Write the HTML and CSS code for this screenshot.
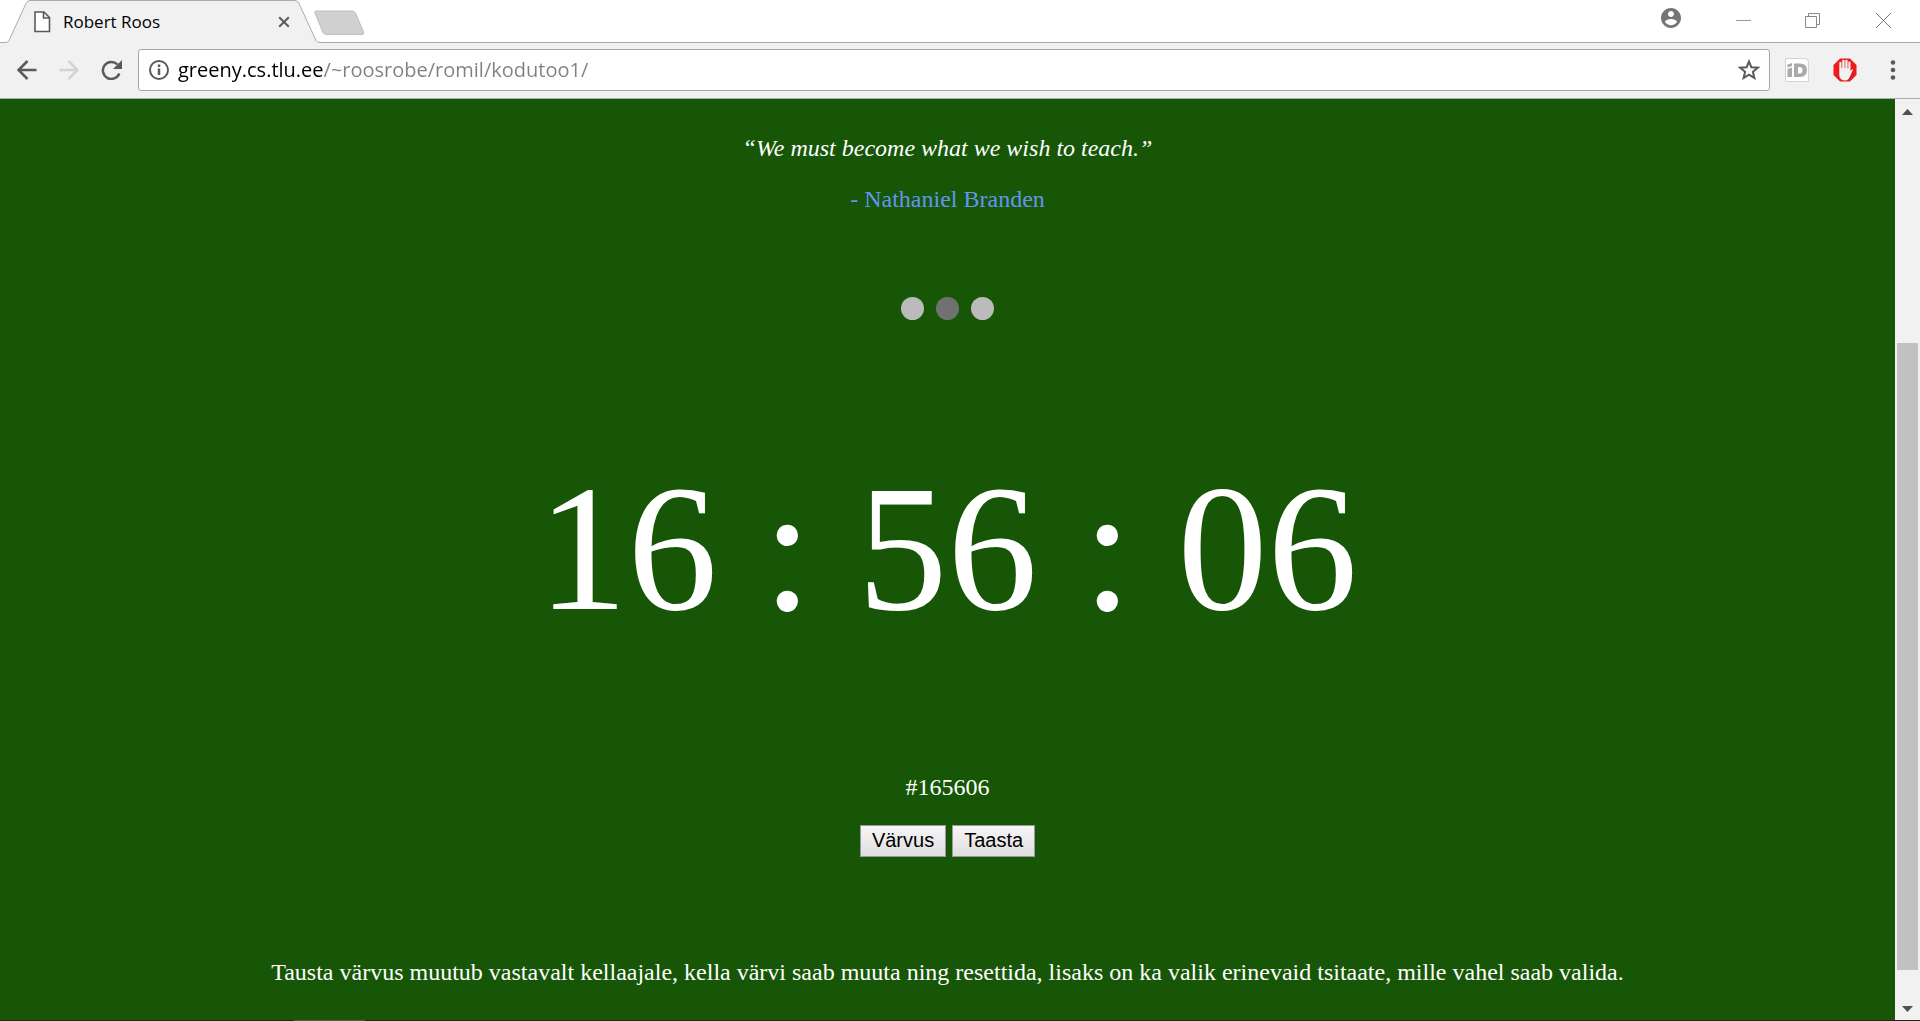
FILE: index.html
```
<!DOCTYPE html>
<html lang="et">
<head>
<meta charset="utf-8">
<title>Robert Roos</title>
<link rel="stylesheet" href="styles.css">
</head>
<body>
<div class="browser">
  <header class="tabs">
    <div class="tab">
      <svg class="tab-shape" width="320" height="43" viewBox="0 0 320 43" aria-hidden="true"><path d="M0 43V42.500H6Q8 42.500 9 40.500L26 3.500Q27.500 .5 30 .5H295Q297.500 .5 299 3.500L316 40.500Q317 42.500 320 42.500V43Z" fill="#f1f1f1"/><path d="M0 42.500H6Q8 42.500 9 40.500L26 3.500Q27.500 .5 30 .5H295Q297.500 .5 299 3.500L316 40.500Q317 42.500 320 42.500" fill="none" stroke="#acacac"/></svg>
      <svg class="file" width="17" height="22" viewBox="0 0 17 22" aria-hidden="true"><path d="M1 1H10L15.500 6.500V20.500H1ZM9.500 1V7H15.500" fill="#fff" stroke="#5a5a5a" stroke-width="1.600"/></svg>
      <span class="tab-title">Robert Roos</span>
      <button class="bare" aria-label="Close tab"><svg width="12" height="12" viewBox="0 0 12 12"><path d="M1.200 1.200L10.800 10.800M10.800 1.200L1.200 10.800" stroke="#5a5a5a" stroke-width="2"/></svg></button>
    </div>
    <button class="bare new-tab" aria-label="New tab"><svg width="52" height="26" viewBox="0 0 52 26"><path d="M2.500 1H38Q40.500 1 41.500 3L49.500 22Q50.500 24.500 48.500 24.500H12.500Q10 24.500 9 22.500L1 3Q0 1 2.500 1Z" fill="#d0d0d0" stroke="#bdbdbd"/></svg></button>
    <div class="window-buttons">
      <button class="bare person" aria-label="Profile"><svg width="20" height="20" viewBox="2 2 20 20"><path fill="#757575" d="M12 2C6.480 2 2 6.480 2 12s4.480 10 10 10 10-4.480 10-10S17.520 2 12 2zm0 3c1.660 0 3 1.340 3 3s-1.340 3-3 3-3-1.340-3-3 1.340-3 3-3zm0 14.200c-2.500 0-4.710-1.280-6-3.220.03-1.990 4-3.080 6-3.080 1.990 0 5.970 1.090 6 3.080-1.290 1.940-3.500 3.220-6 3.220z"/></svg></button>
      <button class="bare" aria-label="Minimize"><svg width="15" height="15" viewBox="0 0 15 15"><path d="M0 7.500H15" stroke="#999"/></svg></button>
      <button class="bare" aria-label="Restore"><svg width="15" height="15" viewBox="0 0 15 15"><path d="M.5 3.500H11.500V14.500H.5ZM3.500 3.500V.5H14.500V11.500H11.500" fill="none" stroke="#888"/></svg></button>
      <button class="bare close" aria-label="Close"><svg width="15" height="15" viewBox="0 0 15 15"><path d="M0 0L15 15M15 0L0 15" stroke="#777"/></svg></button>
    </div>
  </header>
  <nav class="toolbar">
    <button class="bare" aria-label="Back"><svg width="20" height="20" viewBox="0 0 20 20"><path d="M19.500 10H2M10.500 1L1.500 10L10.500 19" fill="none" stroke="#5a5a5a" stroke-width="2.500"/></svg></button>
    <button class="bare" aria-label="Forward"><svg width="20" height="20" viewBox="0 0 20 20"><path d="M.5 10H18M9.500 1L18.500 10L9.500 19" fill="none" stroke="#d3d3d3" stroke-width="2.500"/></svg></button>
    <button class="bare" aria-label="Reload"><svg width="22" height="20" viewBox="0 0 22 20"><path d="M18.300 13.500A8.500 8.500 0 1 1 16.500 4.500" fill="none" stroke="#5a5a5a" stroke-width="2.500"/><path d="M21 0V9H12Z" fill="#5a5a5a"/></svg></button>
    <form class="address">
      <svg width="20" height="20" viewBox="0 0 20 20" aria-hidden="true"><circle cx="10" cy="10" r="9" fill="none" stroke="#5a5a5a" stroke-width="2"/><path d="M10 4.500V7M10 8.500V15" stroke="#5a5a5a" stroke-width="2.500"/></svg>
      <input class="url" type="text" aria-label="Address" value="greeny.cs.tlu.ee/~roosrobe/romil/kodutoo1/">
      <button type="button" class="bare" aria-label="Bookmark"><svg width="22" height="21" viewBox="0 0 22 21"><path d="M11 2.500L13.300 8.200L19.800 8.700L14.900 12.800L16.400 19L11 15.700L5.600 19L7.100 12.800L2.200 8.700L8.700 8.200Z" fill="#fff" stroke="#5a5a5a" stroke-width="2"/></svg></button>
    </form>
    <button class="bare" aria-label="iD extension"><svg width="24" height="24" viewBox="0 0 24 24"><path d="M.5 .5H20Q23.500 1 23.500 4V23.500H.5Z" fill="#fff" stroke="#d4d4d4"/><path d="M2.500 6.500L7 5V8L2.500 9.500ZM2.500 11L7 9.500V19H2.500Z" fill="#aaa"/><path d="M9 5.500H15Q22 5.500 22 12T15 19H9ZM13 9V15.500H14.500Q17.500 15.500 17.500 12.200T14.500 9Z" fill="#aaa" fill-rule="evenodd"/></svg></button>
    <button class="bare blocker" aria-label="Ad blocker"><svg width="24" height="24" viewBox="0 0 24 24"><path d="M7 .5H17L23.500 7V17L17 23.500H7L.5 17V7Z" fill="#ee1c1c"/><path d="M18 12L20 10L21 12L17 21L13 22Z" fill="#b50f0f"/><path d="M6.300 13V5Q6.300 3.700 7.400 3.700T8.500 5V10H9.200V3Q9.200 1.800 10.400 1.800T11.600 3V10H12.300V2.800Q12.300 1.700 13.400 1.700T14.600 2.800V10.500H15.300V4.500Q15.300 3.400 16.400 3.400T17.500 4.500V13L18.800 11.500Q20.800 10.200 20 12L17.300 18Q15.500 22.500 11.800 22.500Q6.300 22 6.300 17Z" fill="#f2f2f2"/></svg></button>
    <button class="bare" aria-label="Menu"><svg width="6" height="20" viewBox="0 0 6 20"><g fill="#5a5a5a"><circle cx="3" cy="2.500" r="2.300"/><circle cx="3" cy="10" r="2.300"/><circle cx="3" cy="17.500" r="2.300"/></g></svg></button>
  </nav>
  <div class="viewport">
    <main class="page">
      <p class="quote">“We must become what we wish to teach.”</p>
      <p class="author">- Nathaniel Branden</p>
      <div class="dots">
        <button class="dot" aria-label="Tsitaat 1"></button>
        <button class="dot active" aria-label="Tsitaat 2"></button>
        <button class="dot" aria-label="Tsitaat 3"></button>
      </div>
      <div class="clock">16 : 56 : 06</div>
      <p class="hex">#165606</p>
      <div class="actions"><button class="action">Värvus</button><button class="action">Taasta</button></div>
      <p class="about">Tausta värvus muutub vastavalt kellaajale, kella värvi saab muuta ning resettida, lisaks on ka valik erinevaid tsitaate, mille vahel saab valida.</p>
    </main>
    <div class="scrollbar" aria-hidden="true">
      <svg width="11" height="6" viewBox="0 0 11 6"><path d="M0 6L5.500 0L11 6Z" fill="#505050"/></svg>
      <div class="track"><div class="thumb"></div></div>
      <svg width="11" height="6" viewBox="0 0 11 6"><path d="M0 0L5.500 6L11 0Z" fill="#505050"/></svg>
    </div>
  </div>
  <div class="edge"><div class="edge-mark"></div></div>
</div>
</body>
</html>
```
FILE: styles.css
```
* { box-sizing: border-box; }
body { margin: 0; }
p { margin: 0; }
svg { display: block; }

.browser {
  display: flex;
  flex-direction: column;
  height: 100vh;
  overflow: hidden;
  font-family: "Open Sans", "Noto Sans", sans-serif;
}
.bare { border: 0; padding: 0; background: none; flex: none; }

/* Tab strip */
.tabs {
  display: flex;
  height: 43px;
  flex: none;
  background: linear-gradient(#acacac, #acacac) bottom / 100% 1px no-repeat #fff;
}
.tab {
  position: relative;
  display: flex;
  align-items: center;
  width: 320px;
  height: 43px;
  padding: 0 30px 0 34px;
}
.tab-shape { position: absolute; left: 0; top: 0; }
.file, .tab-title, .tab .bare { position: relative; }
.tab-title { flex: 1; margin-left: 12px; font-size: 17px; line-height: 24px; }
.new-tab { align-self: flex-start; margin: 10px 0 0 -6px; }
.window-buttons {
  display: flex;
  align-items: center;
  gap: 54px;
  margin-left: auto;
  padding: 0 29px 2px 0;
}
.person { margin: 0 1px 5px 0; }
.close { margin-left: 2px; }

/* Toolbar */
.toolbar {
  display: flex;
  align-items: center;
  height: 56px;
  flex: none;
  padding: 0 24px 2px 17px;
  gap: 22px;
  background: #f1f1f1;
  border-bottom: 1px solid #acacac;
}
.address {
  display: flex;
  align-items: center;
  flex: 1;
  height: 42px;
  margin: 0 1px 0 -7px;
  padding: 0 9px 0 10px;
  gap: 9px;
  background: #fff;
  border: 1px solid #a6a6a6;
  border-radius: 3px;
}
.url {
  flex: 1;
  min-width: 0;
  padding: 0;
  border: 0;
  outline: 0;
  font: 20px/30px "Open Sans", "Noto Sans", sans-serif;
  color: transparent;
  background: linear-gradient(90deg, #000 145px, #808080 145px);
  background-clip: text;
}
.address .bare { margin-left: -8px; }
.address + .bare { margin-left: -8px; }
.blocker { margin: 0 11px 0 2px; }

/* Page */
.viewport { display: flex; flex: 1; min-height: 0; }
.page {
  flex: 1;
  display: flex;
  flex-direction: column;
  align-items: center;
  padding-top: 35px;
  overflow: hidden;
  background: #165606;
  color: #fff;
  font: 24px/28px "Liberation Serif", "Times New Roman", serif;
  text-align: center;
}
.quote { font-style: italic; }
.author { margin-top: 23px; color: #6495ed; }
.dots { display: flex; gap: 12px; margin-top: 84px; }
.dot { width: 23px; height: 23px; padding: 0; border: 0; border-radius: 50%; background: #bbb; }
.dot.active { background: #717171; }
.clock { margin-top: 129px; font-size: 180px; line-height: 200px; }
.hex { margin-top: 124px; }
.actions { display: flex; gap: 6px; margin-top: 24px; }
.action {
  height: 32px;
  padding: 0 11px 2px;
  border: 1px solid #999;
  background: linear-gradient(#f6f6f6, #dedede);
  color: #000;
  font: 20px/24px "Liberation Sans", Arial, sans-serif;
}
.about { margin-top: 101px; }

.scrollbar {
  display: flex;
  flex-direction: column;
  align-items: center;
  width: 25px;
  flex: none;
  padding: 10px 0 8px;
  background: #f1f1f1;
}
.track { display: flex; flex: 1; width: 21px; padding: 228px 0 36px; }
.thumb { flex: 1; background: #c1c1c1; }
.edge { height: 1px; flex: none; padding-left: 294px; background: #222; }
.edge-mark { width: 71px; height: 1px; background: #555; }
```
